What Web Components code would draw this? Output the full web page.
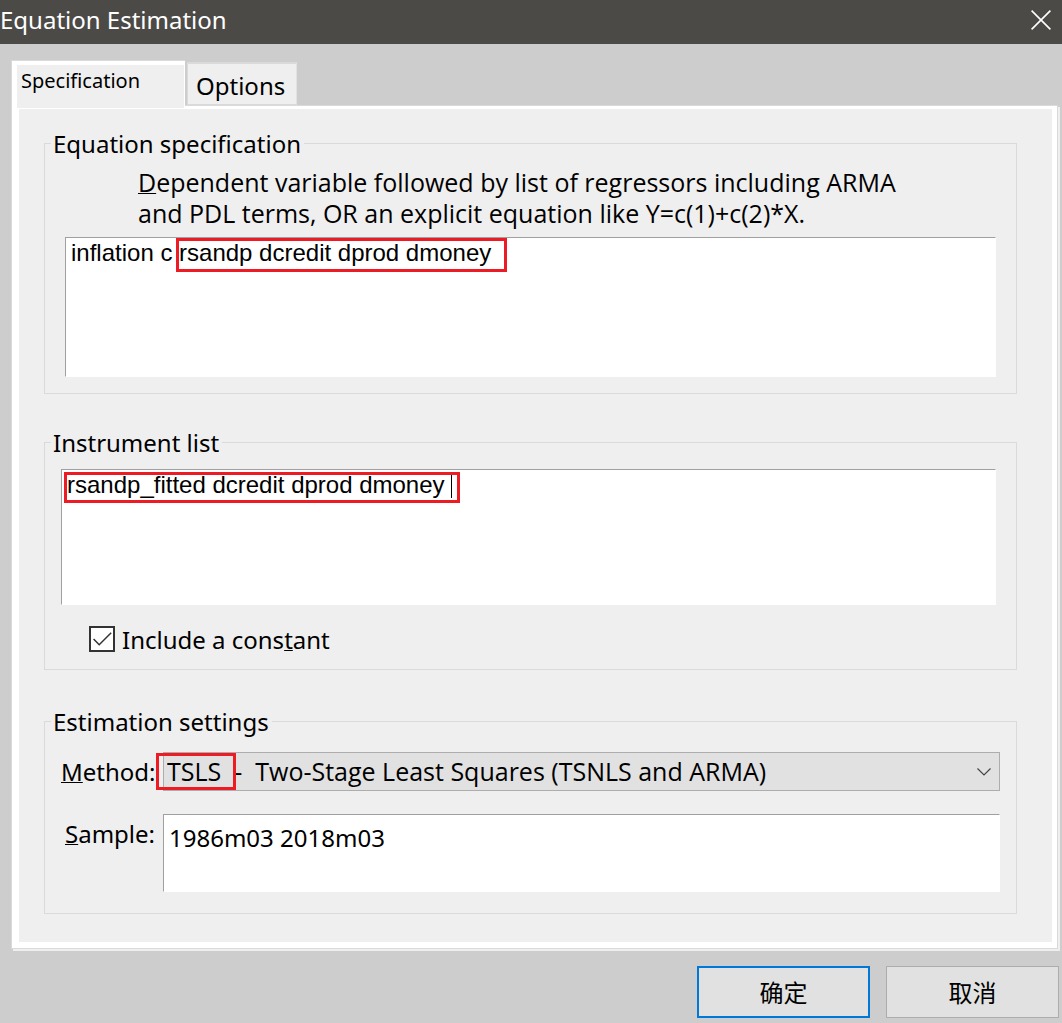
<!DOCTYPE html>
<html lang="en">
<head>
<meta charset="utf-8">
<meta name="viewport" content="width=device-width, initial-scale=1">
<title>Equation Estimation</title>
<style>
  body {
    margin: 0;
    background: #cdcdcd;
    color: #000;
    font: 24px/31px "Noto Sans", "Open Sans", "Noto Sans CJK SC", sans-serif;
  }
</style>
</head>
<body>
<estimation-dialog></estimation-dialog>

<template id="title-bar">
  <style>
    :host { display: flex; align-items: center; justify-content: space-between; height: 44px; background: #4b4a47; color: #fff; }
    h1 { margin: 0; padding-bottom: 6px; font: inherit; }
    button { width: 42px; height: 40px; margin-bottom: 4px; padding: 0; border: 0; background: none; color: inherit; display: grid; place-items: center; }
    svg { display: block; }
  </style>
  <h1><slot></slot></h1>
  <button type="button" aria-label="Close">
    <svg width="20" height="20" viewBox="0 0 20 20" fill="none" stroke="currentColor" stroke-width="1.6"><path d="M.6.6 19.4 19.4M19.4.6.6 19.4"/></svg>
  </button>
</template>

<template id="tab-strip">
  <style>
    :host { display: flex; align-items: flex-start; gap: 2px; }
    button { margin: 0; font: inherit; color: inherit; text-align: left; background: #efefef; }
    .current {
      width: 173px; height: 48px; margin-bottom: -4px; padding: 0 0 14px 4px;
      border: solid #fff; border-width: 4px 1px 1px 5px;
      font-size: 20px; position: relative; outline: 1px solid #dadada; clip-path: inset(-1px 0 0 -1px);
    }
    .other { width: 110px; height: 43px; margin-top: 1px; padding: 2px 0 0 8px; border: 1px solid #dadada; border-top-width: 2px; border-right-color: #e2e2e2; }
  </style>
  <button type="button" role="tab" aria-selected="true" class="current">Specification</button>
  <button type="button" role="tab" aria-selected="false" class="other">Options</button>
</template>

<template id="tab-panel">
  <style>
    :host { display: block; border: 1px solid #dadada; box-shadow: 2px 2px 0 #efefef; }
    .page { border: solid #fff; border-width: 3px 5px 6px 7px; background: #efefef; padding: 19px 35px 28px 25px; display: flex; flex-direction: column; }
  </style>
  <div class="page"><slot></slot></div>
</template>

<template id="group-box">
  <style>
    :host { display: block; }
    fieldset { margin: 0; min-width: 0; border: 1px solid #dadada; padding: 0 var(--pad-right, 20px) var(--pad-bottom, 16px) var(--pad-left, 20px); }
    legend { padding: 0 3px 0 2px; margin-left: calc(6px - var(--pad-left, 20px)); height: 31px; }
  </style>
  <fieldset><legend></legend><slot></slot></fieldset>
</template>

<template id="mark-frame">
  <style>
    :host { display: block; position: absolute; box-sizing: border-box; border: 3px solid #ed1c24; pointer-events: none; }
  </style>
</template>

<template id="dialog-button">
  <style>
    :host { display: block; }
    button { display: block; width: 173px; height: 52px; padding: 0 0 1px; border: 1px solid #adadad; background: #e1e1e1; color: inherit; font: 24px/31px "Noto Sans CJK SC", sans-serif; }
    :host([primary]) button { border: 2px solid #0078d7; }
  </style>
  <button type="button"><slot></slot></button>
</template>

<template id="estimation-form">
  <style>
    :host { display: flex; flex-direction: column; }
    .instruments { margin-top: 33px; --pad-left: 16px; --pad-bottom: 14px; }
    .settings { margin-top: 36px; --pad-left: 16px; --pad-right: 16px; --pad-bottom: 21px; }
    .hint { display: block; width: fit-content; margin: 8px 0 0 73px; font: 25px/31px "Open Sans", sans-serif; }
    .field { position: relative; display: flex; }
    textarea, select { box-sizing: border-box; display: block; width: 100%; margin: 0; border-radius: 0; color: inherit; outline: 0; }
    textarea { resize: none; overflow: hidden; background: #fff; border: 1px solid #fff; border-top-color: #a0a0a0; border-left-color: #a0a0a0; }
    .code { font: 24px/28px "Liberation Sans", Arial, sans-serif; }
    #equation { height: 140px; padding: 1px 5px; }
    #instruments { height: 136px; padding: 1px 5px; }
    .equation-field { margin-top: 8px; }
    .instrument-field { margin-top: 11px; }
    .caret { position: absolute; left: 390px; top: 6px; width: 1px; height: 23px; background: #000; }
    .check { display: flex; align-items: center; gap: 7px; width: fit-content; margin: 19px 0 0 28px; }
    .tick { position: relative; display: grid; margin-bottom: 1px; }
    .tick input { appearance: none; width: 26px; height: 26px; margin: 0; border: 2px solid #333; background: #fff; }
    .tick svg { position: absolute; left: 4px; top: 6px; }
    .rows { display: grid; grid-template-columns: 94px 1fr; column-gap: 8px; row-gap: 23px; margin-top: 15px; }
    .rows label { text-align: right; white-space: nowrap; padding-top: 4px; }
    select { appearance: none; height: 39px; padding: 0 32px 0 3px; border: 1px solid #adadad; background: #e1e1e1; font: 25px/31px "Open Sans", sans-serif; }
    .arrow { position: absolute; right: 9px; top: 16px; pointer-events: none; }
    #sample { height: 78px; padding: 7px 5px; font: inherit; }
    .mark-regressors { left: 111px; top: 1px; width: 331px; height: 34px; }
    .mark-instruments { left: 3px; top: 3px; width: 396px; height: 31px; }
    .mark-method { left: -7px; top: 1px; width: 80px; height: 37px; }
    u { text-decoration-thickness: 1px; text-underline-offset: 1px; text-decoration-skip-ink: none; }
  </style>
  <group-box caption="Equation specification">
    <label class="hint" for="equation"><u>D</u>ependent variable followed by list of regressors including ARMA<br>and PDL terms, OR an explicit equation like Y=c(1)+c(2)*X.</label>
    <div class="field equation-field">
      <textarea id="equation" class="code" spellcheck="false">inflation c rsandp dcredit dprod dmoney</textarea>
      <mark-frame class="mark-regressors"></mark-frame>
    </div>
  </group-box>
  <group-box class="instruments" caption="Instrument list">
    <div class="field instrument-field">
      <textarea id="instruments" class="code" aria-label="Instrument list" spellcheck="false">rsandp_fitted dcredit dprod dmoney</textarea>
      <span class="caret"></span>
      <mark-frame class="mark-instruments"></mark-frame>
    </div>
    <label class="check" for="constant">
      <span class="tick">
        <input type="checkbox" id="constant" checked>
        <svg width="19" height="15" viewBox="0 0 19 15" fill="none" stroke="#333" stroke-width="1.5"><path d="M.6 7 6.2 12.8 18.2.8"/></svg>
      </span>
      <span>Include a cons<u>t</u>ant</span>
    </label>
  </group-box>
  <group-box class="settings" caption="Estimation settings">
    <div class="rows">
      <label for="method"><u>M</u>ethod:</label>
      <div class="field">
        <select id="method"><option>TSLS&nbsp; -&nbsp; Two-Stage Least Squares (TSNLS and ARMA)</option></select>
        <svg class="arrow" width="14" height="8" viewBox="0 0 14 8" fill="none" stroke="#444" stroke-width="1.2"><path d="M.5.5 7 7 13.5.5"/></svg>
        <mark-frame class="mark-method"></mark-frame>
      </div>
      <label for="sample"><u>S</u>ample:</label>
      <div class="field"><textarea id="sample" spellcheck="false">1986m03 2018m03</textarea></div>
    </div>
  </group-box>
</template>

<template id="estimation-dialog">
  <style>
    :host { display: flex; flex-direction: column; min-height: 100vh; }
    main { padding: 17px 4px 0 11px; }
    tab-strip { padding-left: 1px; }
    footer { display: flex; justify-content: flex-end; gap: 16px; padding: 17px 3px 5px; }
  </style>
  <title-bar>Equation Estimation</title-bar>
  <main>
    <tab-strip role="tablist"></tab-strip>
    <tab-panel><estimation-form></estimation-form></tab-panel>
  </main>
  <footer>
    <dialog-button primary lang="zh-CN">确定</dialog-button>
    <dialog-button lang="zh-CN">取消</dialog-button>
  </footer>
</template>

<script>
  // Each element clones the template whose id is its own tag name.
  class TemplateElement extends HTMLElement {
    constructor() {
      super();
      const template = document.getElementById(this.localName);
      this.attachShadow({ mode: "open" }).append(template.content.cloneNode(true));
    }
  }
  class TitleBar extends TemplateElement {}
  class TabStrip extends TemplateElement {}
  class TabPanel extends TemplateElement {}
  class GroupBox extends TemplateElement {
    connectedCallback() {
      this.shadowRoot.querySelector("legend").textContent = this.getAttribute("caption");
    }
  }
  class MarkFrame extends TemplateElement {}
  class DialogButton extends TemplateElement {}
  class EstimationForm extends TemplateElement {}
  class EstimationDialog extends TemplateElement {}

  customElements.define("title-bar", TitleBar);
  customElements.define("tab-strip", TabStrip);
  customElements.define("tab-panel", TabPanel);
  customElements.define("group-box", GroupBox);
  customElements.define("mark-frame", MarkFrame);
  customElements.define("dialog-button", DialogButton);
  customElements.define("estimation-form", EstimationForm);
  customElements.define("estimation-dialog", EstimationDialog);
</script>
</body>
</html>
